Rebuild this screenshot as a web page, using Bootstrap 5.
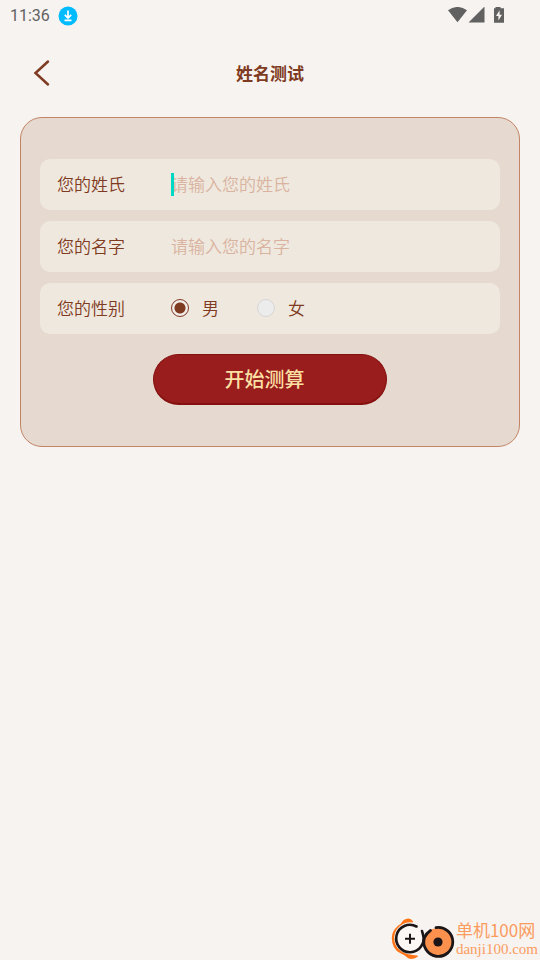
<!DOCTYPE html>
<html lang="zh-CN">
<head>
<meta charset="utf-8">
<meta name="viewport" content="width=device-width, initial-scale=1">
<title>姓名测试</title>
<link href="https://cdn.jsdelivr.net/npm/bootstrap@5.3.0/dist/css/bootstrap.min.css" rel="stylesheet">
<style>
:root { --brown: #7f3a22; --page: #f7f3f0; --panel: #e5d9d0; --field: #efe8de; }
body { background: var(--page); color: var(--brown); font: 17px/24px "Noto Sans CJK SC", sans-serif; }
.status-bar { height: 32px; padding: 0 35px 0 10px; gap: 8px; color: #616161; font: 400 16px/20px Roboto, sans-serif; }
.title-bar { min-height: 82px; margin-bottom: 3px; grid-template-columns: 64px 1fr 64px; }
.back-btn { color: var(--brown); padding: 0 0 0 33px; border: 0; background: none; line-height: 0; }
.title-bar h1 { font-size: 17px; line-height: 24px; font-weight: 700; }
.panel { margin: 0 20px; padding: 41px 19px; border: 1px solid #c38465; border-radius: 22px; background: var(--panel); }
.field-row { min-height: 51px; padding: 0 17px 2px; border-radius: 10px; background: var(--field); }
.rows { gap: 11px; }
.field-name { flex: 0 0 114px; font-weight: 350; }
.field-input { color: var(--brown); border: 0; padding: 0; background: none; outline: 0; height: 49px; font-weight: 350; caret-color: #00d6c4; }
.field-input::placeholder { color: #d9b3a0; opacity: 1; }
.caret { left: 0; top: 14px; width: 3px; height: 23px; background: #00d8c6; }
.choice { margin-right: 38px; gap: 13px; font-weight: 350; }
.choice input { appearance: none; width: 18px; height: 18px; margin: 0; border: 1px solid #d6d6d6; border-radius: 50%; background: #ececec; }
.choice input:checked { border-color: var(--brown); background: radial-gradient(circle, var(--brown) 0 5px, #f2ece8 6px); }
.start-btn { width: 234px; height: 51px; margin-top: 20px; border: 1px solid #84110f; border-bottom-width: 2px; border-radius: 26px; background: #991d1d; color: #fbdfa3; font-size: 20px; line-height: 24px; font-weight: 500; padding: 0 11px 0 0; }
.start-btn:hover { background: #a42323; color: #fbdfa3; border-color: #84110f; }
.site-mark { color: #fb9c5f; padding-right: 2px; }
.site-name { font-size: 17px; line-height: 20px; }
.site-host { font-family: "Liberation Serif", serif; font-size: 15px; line-height: 18px; }
</style>
<script src="https://cdn.jsdelivr.net/npm/bootstrap@5.3.0/dist/js/bootstrap.bundle.min.js" defer></script>
</head>
<body class="d-flex flex-column min-vh-100">
<div class="status-bar d-flex align-items-center">
  <span>11:36</span>
  <svg width="20" height="20" viewBox="0 0 20 20" aria-hidden="true"><circle cx="10" cy="10" r="9.5" fill="#00bbff"/><path d="M10 4.5v7M6.8 8.8l3.2 3.2 3.2-3.2M6.5 14.3h7" fill="none" stroke="#fff" stroke-width="1.7"/></svg>
  <svg class="ms-auto" width="57" height="18" viewBox="0 0 57 18" fill="#616161" aria-hidden="true"><path d="M0 3.2Q9.500-3.300 19 3.200L9.500 15.200zM20.500 15.500h16v-16zM47.500 0h5v1.200h3.500v14.600H46V1.200h1.500z"/><path d="M51.600 3.200 48 9h2.400v4.600L54 7.700h-2.400z" fill="#f7f3f0"/></svg>
</div>
<header class="title-bar d-grid align-items-center">
  <button type="button" class="back-btn text-start" aria-label="返回"><svg width="18" height="28" viewBox="0 0 18 28"><path d="M15 2.500 2.500 14 15 25.500" fill="none" stroke="currentColor" stroke-width="2.500" stroke-linecap="round"/></svg></button>
  <h1 class="m-0 text-center">姓名测试</h1>
</header>
<main>
  <form class="panel d-flex flex-column">
    <div class="rows d-flex flex-column">
      <div class="field-row d-flex align-items-center">
        <label class="field-name" for="surname">您的姓氏</label>
        <div class="position-relative flex-grow-1"><input class="field-input w-100 d-block" id="surname" type="text" placeholder="请输入您的姓氏"><span class="caret position-absolute"></span></div>
      </div>
      <div class="field-row d-flex align-items-center">
        <label class="field-name" for="given">您的名字</label>
        <div class="flex-grow-1"><input class="field-input w-100 d-block" id="given" type="text" placeholder="请输入您的名字"></div>
      </div>
      <div class="field-row d-flex align-items-center" role="radiogroup" aria-labelledby="sex">
        <span class="field-name" id="sex">您的性别</span>
        <label class="choice d-flex align-items-center"><input type="radio" name="sex" checked>男</label>
        <label class="choice d-flex align-items-center"><input type="radio" name="sex">女</label>
      </div>
    </div>
    <button type="button" class="btn start-btn align-self-center">开始测算</button>
  </form>
</main>
<footer class="site-mark mt-auto d-flex align-items-center justify-content-end">
  <svg width="65" height="43" viewBox="0 0 65 43" fill="none" aria-hidden="true">
    <path d="M22 4.500Q20 1 16 1.700 12 2.500 10 6.500 1 12 .8 21 1 32 9 36 14 38 17 41 22 43.500 27 39.500 27 38 22 38 12 37 6.500 31 3 26 3.200 20 4 11 12 7 16 4.500 22 5.500Z" fill="#ff7417"/>
    <circle cx="19" cy="21.700" r="13.500" fill="#faf7f5"/>
    <path d="M25.500 9.500A13.700 13.700 0 1 0 32 17.500L31 14" stroke="#1c1518" stroke-width="2.600" stroke-linecap="round" stroke-linejoin="round"/>
    <path d="M19 16.700v10M14 21.700h10" stroke="#1c1518" stroke-width="2"/>
    <circle cx="47" cy="25" r="14" fill="#fb914d"/>
    <path d="M39.500 13.500Q35.500 16 33.500 20.500M45 10.600A14.500 14.500 0 1 1 33.500 20.500" stroke="#1c1518" stroke-width="2.800" stroke-linecap="round"/>
    <circle cx="47" cy="25" r="4.600" fill="#1c1518"/>
  </svg>
  <div><div class="site-name">单机100网</div><div class="site-host">danji100.com</div></div>
</footer>
</body>
</html>
